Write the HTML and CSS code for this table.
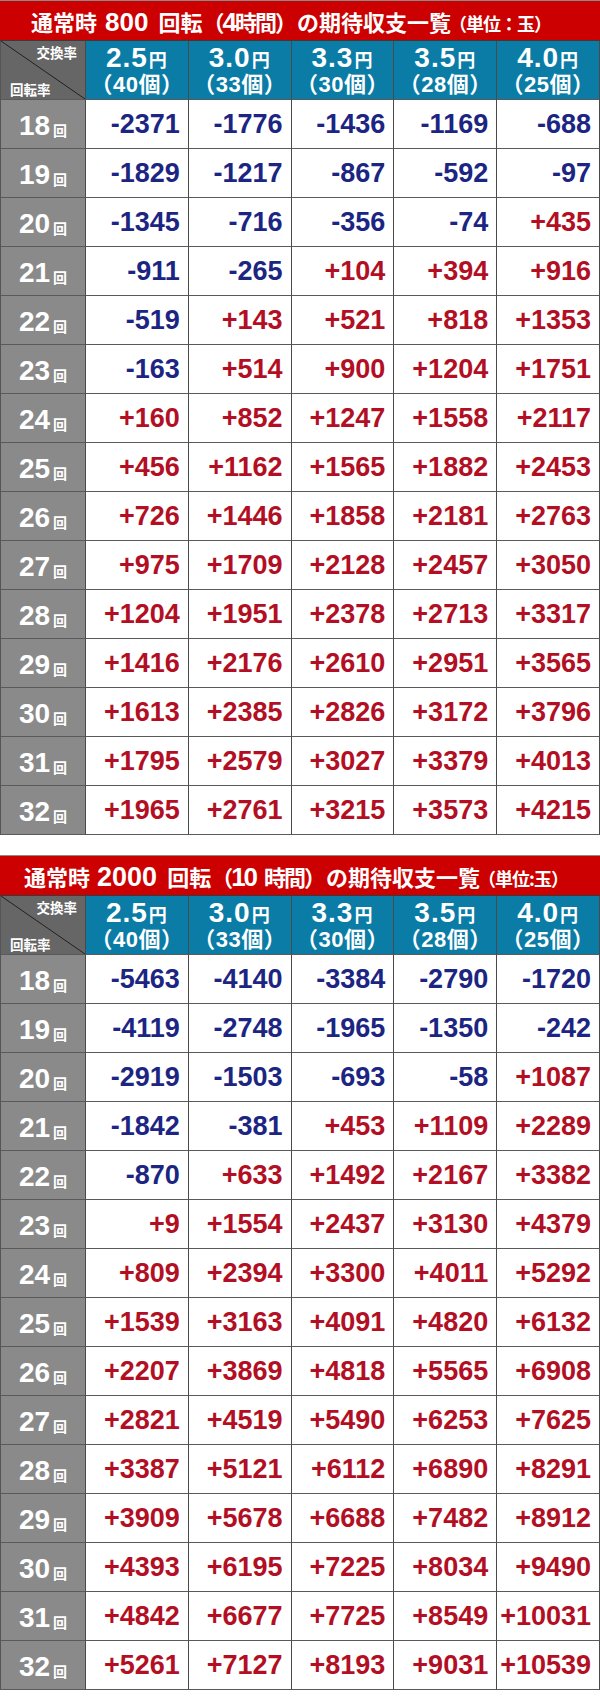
FILE: index.html
```html
<!DOCTYPE html>
<html lang="ja">
<head>
<meta charset="utf-8">
<title>期待収支一覧</title>
<link rel="stylesheet" href="styles.css">
</head>
<body>
<section class="block">
  <h2 class="title t1">通常時<span class="d">800</span>回転<span class="par">（<span class="d4">4</span>時間）</span>の期待収支一覧<span class="unit">（単位：玉）</span></h2>
  <div class="grid">
    <div class="corner"><span class="c-top">交換率</span><span class="c-bot">回転率</span></div>
    <div class="hd"><div class="rate">2.5<small>円</small></div><div class="cnt">（40個）</div></div>
    <div class="hd"><div class="rate">3.0<small>円</small></div><div class="cnt">（33個）</div></div>
    <div class="hd"><div class="rate">3.3<small>円</small></div><div class="cnt">（30個）</div></div>
    <div class="hd"><div class="rate">3.5<small>円</small></div><div class="cnt">（28個）</div></div>
    <div class="hd"><div class="rate">4.0<small>円</small></div><div class="cnt">（25個）</div></div>

    <div class="rl">18<small>回</small></div><div class="v n">-2371</div><div class="v n">-1776</div><div class="v n">-1436</div><div class="v n">-1169</div><div class="v n">-688</div>
    <div class="rl">19<small>回</small></div><div class="v n">-1829</div><div class="v n">-1217</div><div class="v n">-867</div><div class="v n">-592</div><div class="v n">-97</div>
    <div class="rl">20<small>回</small></div><div class="v n">-1345</div><div class="v n">-716</div><div class="v n">-356</div><div class="v n">-74</div><div class="v p">+435</div>
    <div class="rl">21<small>回</small></div><div class="v n">-911</div><div class="v n">-265</div><div class="v p">+104</div><div class="v p">+394</div><div class="v p">+916</div>
    <div class="rl">22<small>回</small></div><div class="v n">-519</div><div class="v p">+143</div><div class="v p">+521</div><div class="v p">+818</div><div class="v p">+1353</div>
    <div class="rl">23<small>回</small></div><div class="v n">-163</div><div class="v p">+514</div><div class="v p">+900</div><div class="v p">+1204</div><div class="v p">+1751</div>
    <div class="rl">24<small>回</small></div><div class="v p">+160</div><div class="v p">+852</div><div class="v p">+1247</div><div class="v p">+1558</div><div class="v p">+2117</div>
    <div class="rl">25<small>回</small></div><div class="v p">+456</div><div class="v p">+1162</div><div class="v p">+1565</div><div class="v p">+1882</div><div class="v p">+2453</div>
    <div class="rl">26<small>回</small></div><div class="v p">+726</div><div class="v p">+1446</div><div class="v p">+1858</div><div class="v p">+2181</div><div class="v p">+2763</div>
    <div class="rl">27<small>回</small></div><div class="v p">+975</div><div class="v p">+1709</div><div class="v p">+2128</div><div class="v p">+2457</div><div class="v p">+3050</div>
    <div class="rl">28<small>回</small></div><div class="v p">+1204</div><div class="v p">+1951</div><div class="v p">+2378</div><div class="v p">+2713</div><div class="v p">+3317</div>
    <div class="rl">29<small>回</small></div><div class="v p">+1416</div><div class="v p">+2176</div><div class="v p">+2610</div><div class="v p">+2951</div><div class="v p">+3565</div>
    <div class="rl">30<small>回</small></div><div class="v p">+1613</div><div class="v p">+2385</div><div class="v p">+2826</div><div class="v p">+3172</div><div class="v p">+3796</div>
    <div class="rl">31<small>回</small></div><div class="v p">+1795</div><div class="v p">+2579</div><div class="v p">+3027</div><div class="v p">+3379</div><div class="v p">+4013</div>
    <div class="rl">32<small>回</small></div><div class="v p">+1965</div><div class="v p">+2761</div><div class="v p">+3215</div><div class="v p">+3573</div><div class="v p">+4215</div>
  </div>
</section>

<section class="block">
  <h2 class="title t2">通常時<span class="d">2000</span>回転<span class="par">（<span class="d4">10</span><span class="sp"></span>時間）</span>の期待収支一覧<span class="unit">（単位:玉）</span></h2>
  <div class="grid">
    <div class="corner"><span class="c-top">交換率</span><span class="c-bot">回転率</span></div>
    <div class="hd"><div class="rate">2.5<small>円</small></div><div class="cnt">（40個）</div></div>
    <div class="hd"><div class="rate">3.0<small>円</small></div><div class="cnt">（33個）</div></div>
    <div class="hd"><div class="rate">3.3<small>円</small></div><div class="cnt">（30個）</div></div>
    <div class="hd"><div class="rate">3.5<small>円</small></div><div class="cnt">（28個）</div></div>
    <div class="hd"><div class="rate">4.0<small>円</small></div><div class="cnt">（25個）</div></div>

    <div class="rl">18<small>回</small></div><div class="v n">-5463</div><div class="v n">-4140</div><div class="v n">-3384</div><div class="v n">-2790</div><div class="v n">-1720</div>
    <div class="rl">19<small>回</small></div><div class="v n">-4119</div><div class="v n">-2748</div><div class="v n">-1965</div><div class="v n">-1350</div><div class="v n">-242</div>
    <div class="rl">20<small>回</small></div><div class="v n">-2919</div><div class="v n">-1503</div><div class="v n">-693</div><div class="v n">-58</div><div class="v p">+1087</div>
    <div class="rl">21<small>回</small></div><div class="v n">-1842</div><div class="v n">-381</div><div class="v p">+453</div><div class="v p">+1109</div><div class="v p">+2289</div>
    <div class="rl">22<small>回</small></div><div class="v n">-870</div><div class="v p">+633</div><div class="v p">+1492</div><div class="v p">+2167</div><div class="v p">+3382</div>
    <div class="rl">23<small>回</small></div><div class="v p">+9</div><div class="v p">+1554</div><div class="v p">+2437</div><div class="v p">+3130</div><div class="v p">+4379</div>
    <div class="rl">24<small>回</small></div><div class="v p">+809</div><div class="v p">+2394</div><div class="v p">+3300</div><div class="v p">+4011</div><div class="v p">+5292</div>
    <div class="rl">25<small>回</small></div><div class="v p">+1539</div><div class="v p">+3163</div><div class="v p">+4091</div><div class="v p">+4820</div><div class="v p">+6132</div>
    <div class="rl">26<small>回</small></div><div class="v p">+2207</div><div class="v p">+3869</div><div class="v p">+4818</div><div class="v p">+5565</div><div class="v p">+6908</div>
    <div class="rl">27<small>回</small></div><div class="v p">+2821</div><div class="v p">+4519</div><div class="v p">+5490</div><div class="v p">+6253</div><div class="v p">+7625</div>
    <div class="rl">28<small>回</small></div><div class="v p">+3387</div><div class="v p">+5121</div><div class="v p">+6112</div><div class="v p">+6890</div><div class="v p">+8291</div>
    <div class="rl">29<small>回</small></div><div class="v p">+3909</div><div class="v p">+5678</div><div class="v p">+6688</div><div class="v p">+7482</div><div class="v p">+8912</div>
    <div class="rl">30<small>回</small></div><div class="v p">+4393</div><div class="v p">+6195</div><div class="v p">+7225</div><div class="v p">+8034</div><div class="v p">+9490</div>
    <div class="rl">31<small>回</small></div><div class="v p">+4842</div><div class="v p">+6677</div><div class="v p">+7725</div><div class="v p">+8549</div><div class="v p">+10031</div>
    <div class="rl">32<small>回</small></div><div class="v p">+5261</div><div class="v p">+7127</div><div class="v p">+8193</div><div class="v p">+9031</div><div class="v p">+10539</div>
  </div>
</section>
</body>
</html>
```

FILE: styles.css
```css
* { box-sizing: border-box; }

body {
  margin: 0;
  width: 600px;
  background: #fff;
  font-family: "Liberation Sans", "Noto Sans CJK JP", sans-serif;
}

.block + .block { margin-top: 20px; }

.title {
  margin: 0;
  height: 41px;
  border-top: 1px solid #8a8a8a;
  border-bottom: 1px solid #3a3a3a;
  background: #cc0000;
  color: #fff;
  font-size: 22px;
  font-weight: bold;
  font-family: "Noto Sans CJK JP", sans-serif;
  display: flex;
  align-items: baseline;
  justify-content: center;
  padding-top: 3px;
  white-space: nowrap;
  line-height: 34px;
}

.t1 { padding-right: 18px; }
.t2 { padding-right: 8px; }

.title .d {
  font-family: "Liberation Sans", sans-serif;
  font-size: 26px;
  margin: 0 10px 0 8px;
}

.t2 .d { font-size: 27px; margin: 0 10px 0 7px; }

.title .d4 {
  font-family: "Liberation Sans", sans-serif;
  font-size: 26px;
}

.title .sp { display: inline-block; width: 8px; }

.title .par { letter-spacing: -2px; margin-right: 2px; }

.title .unit {
  font-size: 18px;
  letter-spacing: -1px;
  margin-left: -2px;
}

.grid {
  display: grid;
  grid-template-columns: 85px repeat(5, 1fr);
  grid-template-rows: 59px;
  grid-auto-rows: 49px;
  border-left: 1px solid #555;
}

.grid > div {
  border-right: 1px solid #4a4a4a;
  border-bottom: 1px solid #5a5a5a;
}

.corner {
  background:
    linear-gradient(to top right, transparent calc(50% - 0.8px), #1e1e1e 50%, transparent calc(50% + 0.8px)),
    #666;
  display: flex;
  flex-direction: column;
  justify-content: space-between;
  color: #fff;
  font-size: 13.5px;
  font-weight: bold;
  font-family: "Noto Sans CJK JP", sans-serif;
  padding: 3px 0 2px 9px;
  line-height: 16px;
}

.c-top { align-self: flex-end; padding-right: 8px; }
.c-bot { align-self: flex-start; }

.hd {
  background: #0a7ca6;
  color: #fff;
  font-weight: bold;
  text-align: center;
  display: flex;
  flex-direction: column;
  justify-content: center;
  padding-top: 1px;
}

.rate {
  font-size: 28px;
  line-height: 27px;
  letter-spacing: 1px;
}

.rate small {
  font-size: 18px;
  font-family: "Noto Sans CJK JP", sans-serif;
  margin-left: 1px;
}

.cnt {
  font-size: 22px;
  line-height: 24px;
  letter-spacing: 0.5px;
  font-family: "Liberation Sans", "Noto Sans CJK JP", sans-serif;
}

.rl {
  background: #8a8a8a;
  color: #fff;
  font-weight: bold;
  font-size: 28px;
  display: flex;
  align-items: center;
  justify-content: center;
  padding-top: 3px;
}

.rl small {
  font-size: 14px;
  font-family: "Noto Sans CJK JP", sans-serif;
  margin-left: 3px;
  margin-top: 8px;
}

.v {
  background: #fff;
  font-size: 27px;
  font-weight: bold;
  display: flex;
  align-items: center;
  justify-content: flex-end;
  padding-right: 8px;
  padding-top: 1px;
}

.n { color: #1c2582; }
.p { color: #b30f24; }
```
